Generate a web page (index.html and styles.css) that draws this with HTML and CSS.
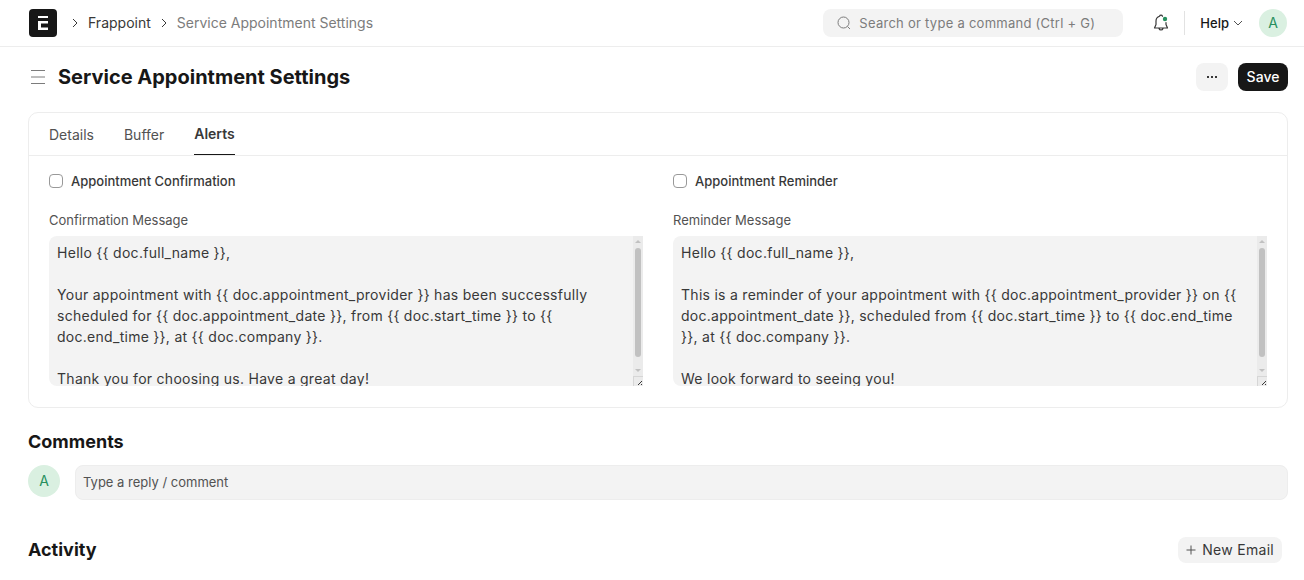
FILE: index.html
```html
<!DOCTYPE html>
<html lang="en">
<head>
<meta charset="utf-8">
<meta name="viewport" content="width=device-width, initial-scale=1">
<title>Service Appointment Settings</title>
<link rel="stylesheet" href="styles.css">
</head>
<body>
<header class="navbar">
  <nav class="breadcrumbs" aria-label="Breadcrumb">
    <a class="logo" href="#" aria-label="Home">
      <svg width="28" height="28" viewBox="0 0 28 28"><rect width="28" height="28" rx="4" fill="#171717"/><path d="M9 7h10v2H9zM9 12h10v2.500h-7V18.500h7V21H9z" fill="#fff"/></svg>
    </a>
    <svg class="chevron" width="8" height="10" viewBox="0 0 8 10"><path d="M2 1l4 4-4 4"/></svg>
    <a class="crumb" href="#">Frappoint</a>
    <svg class="chevron" width="8" height="10" viewBox="0 0 8 10"><path d="M2 1l4 4-4 4"/></svg>
    <a class="crumb crumb-current" href="#">Service Appointment Settings</a>
  </nav>
  <div class="nav-tools">
    <label class="search">
      <svg width="14" height="14" viewBox="0 0 14 14" fill="none" stroke="#7c7c7c"><circle cx="6.5" cy="6.5" r="5.5"/><path d="M10.5 10.5l2.5 2.5"/></svg>
      <input class="search-input" type="text" aria-label="Search" placeholder="Search or type a command (Ctrl + G)">
    </label>
    <button class="bell" type="button" aria-label="Notifications">
      <svg width="16" height="18" viewBox="0 0 16 18" fill="none" stroke="#383838" stroke-width="1.2" stroke-linejoin="round" stroke-linecap="round"><path d="M9.500 2.300C9.200 1.500 8.700 1.200 8 1.200S6.800 1.500 6.500 2.300C4.300 3 3 4.800 3 7v3.500L1.500 14h13L13 10.500V8.500M6 14.500c.3 1 1 1.500 2 1.500s1.700-.5 2-1.500"/><circle cx="12" cy="5" r="2.200" fill="#278f5e" stroke="none"/></svg>
    </button>
    <span class="divider"></span>
    <button class="help" type="button">Help
      <svg width="10" height="6" viewBox="0 0 10 6" fill="none" stroke="#525252"><path d="M1 1l4 4 4-4"/></svg>
    </button>
    <button class="avatar avatar-small" type="button">A</button>
  </div>
</header>
<div class="page-head">
  <button class="menu" type="button" aria-label="Toggle sidebar">
    <svg width="16" height="16" viewBox="0 0 16 16" stroke="#7c7c7c"><path d="M1 1.500h14M1 8h14M1 14.500h14"/></svg>
  </button>
  <h1 class="title">Service Appointment Settings</h1>
  <button class="more" type="button" aria-label="Menu">
    <svg width="12" height="2" viewBox="0 0 12 2" fill="#383838"><path d="M1 0h2v2H1zM5 0h2v2H5zM9 0h2v2H9z"/></svg>
  </button>
  <button class="save" type="button">Save</button>
</div>
<main class="content">
  <section class="card">
    <div class="tabs" role="tablist">
      <button class="tab" type="button" role="tab">Details</button>
      <button class="tab" type="button" role="tab">Buffer</button>
      <button class="tab tab-active" type="button" role="tab" aria-selected="true">Alerts</button>
    </div>
    <div class="columns">
      <div class="column">
        <label class="check"><input class="checkbox" type="checkbox">Appointment Confirmation</label>
        <label class="field-label" for="confirmation">Confirmation Message</label>
        <div class="message-box">
          <textarea class="message" id="confirmation">Hello {{ doc.full_name }},

Your appointment with {{ doc.appointment_provider }} has been successfully scheduled for {{ doc.appointment_date }}, from {{ doc.start_time }} to {{ doc.end_time }}, at {{ doc.company }}.

Thank you for choosing us. Have a great day!</textarea>
          <div class="scrollbar" aria-hidden="true">
            <svg width="10" height="12" viewBox="0 0 10 12" fill="#c1c1c1"><path d="M2 7l3-3 3 3z"/></svg>
            <span class="thumb"></span>
            <svg width="10" height="12" viewBox="0 0 10 12" fill="#c1c1c1"><path d="M2 5l3 3 3-3z"/></svg>
            <svg width="10" height="10" viewBox="0 0 10 10" fill="none"><path d="M0 .5h10M.5 0v10" stroke="#d6d6d6"/><path d="M5 9l4-4M8 9l1-1" stroke="#383838"/></svg>
          </div>
        </div>
      </div>
      <div class="column">
        <label class="check"><input class="checkbox" type="checkbox">Appointment Reminder</label>
        <label class="field-label" for="reminder">Reminder Message</label>
        <div class="message-box">
          <textarea class="message" id="reminder">Hello {{ doc.full_name }},

This is a reminder of your appointment with {{ doc.appointment_provider }} on {{ doc.appointment_date }}, scheduled from {{ doc.start_time }} to {{ doc.end_time }}, at {{ doc.company }}.

We look forward to seeing you!</textarea>
          <div class="scrollbar" aria-hidden="true">
            <svg width="10" height="12" viewBox="0 0 10 12" fill="#c1c1c1"><path d="M2 7l3-3 3 3z"/></svg>
            <span class="thumb"></span>
            <svg width="10" height="12" viewBox="0 0 10 12" fill="#c1c1c1"><path d="M2 5l3 3 3-3z"/></svg>
            <svg width="10" height="10" viewBox="0 0 10 10" fill="none"><path d="M0 .5h10M.5 0v10" stroke="#d6d6d6"/><path d="M5 9l4-4M8 9l1-1" stroke="#383838"/></svg>
          </div>
        </div>
      </div>
    </div>
  </section>
  <h2 class="section-title">Comments</h2>
  <div class="comment-row">
    <span class="avatar">A</span>
    <input class="comment" type="text" aria-label="Comment" placeholder="Type a reply / comment">
  </div>
  <div class="activity">
    <h2 class="section-title">Activity</h2>
    <button class="new-email" type="button">
      <svg width="10" height="10" viewBox="0 0 10 10" stroke="#525252"><path d="M5 0.500v9M0.500 5h9"/></svg>
      New Email
    </button>
  </div>
</main>
</body>
</html>
```
FILE: styles.css
```css
* { box-sizing: border-box; }
body {
  margin: 0;
  background: #fff;
  color: #383838;
  font-family: Inter, "Liberation Sans", sans-serif;
  font-size: 14px;
  line-height: 21px;
}
button, input, textarea { font: inherit; color: inherit; }
button { border: 0; padding: 0; background: none; cursor: pointer; }
a { color: inherit; text-decoration: none; }
svg { display: block; flex: none; }

.navbar {
  display: flex;
  align-items: center;
  justify-content: space-between;
  height: 47px;
  padding: 0 17px 0 29px;
  border-bottom: 1px solid #ededed;
}
.breadcrumbs { display: flex; align-items: center; gap: 9px; }
.logo { margin-right: 5px; }
.chevron { fill: none; stroke: #383838; }
.crumb { padding-bottom: 1px; }
.crumb-current { color: #7c7c7c; }
.nav-tools { display: flex; align-items: center; }
.search {
  display: flex;
  align-items: center;
  gap: 8px;
  width: 300px;
  height: 28px;
  padding: 0 14px;
  border-radius: 8px;
  background: #f3f3f3;
}
.search-input {
  flex: 1;
  min-width: 0;
  padding: 0;
  border: 0;
  outline: 0;
  background: none;
  font-size: 13px;
  letter-spacing: 0.02em;
}
.search-input::placeholder { color: #7c7c7c; opacity: 1; }
.bell { margin-left: 30px; }
.divider { width: 1px; height: 24px; margin: 0 15px; background: #e2e2e2; }
.help { display: flex; align-items: center; gap: 4px; font-size: 13px; font-weight: 500; color: #171717; }
.avatar {
  display: flex;
  align-items: center;
  justify-content: center;
  flex: none;
  width: 32px;
  height: 32px;
  padding-bottom: 1px;
  border-radius: 50%;
  background: #daf0e1;
  color: #278f5e;
}
.avatar-small { width: 28px; height: 28px; margin-left: 16px; }

.page-head { display: flex; align-items: center; height: 60px; padding: 0 16px 0 30px; }
.title { flex: 1; margin: 0 0 0 12px; font-size: 20px; line-height: 24px; font-weight: 700; color: #171717; }
.more {
  display: flex;
  align-items: center;
  justify-content: center;
  width: 32px;
  height: 28px;
  border-radius: 8px;
  background: #f3f3f3;
}
.save { min-width: 50px; height: 28px; margin-left: 10px; padding: 0 8px 1px; border-radius: 8px; background: #171717; color: #fff; font-weight: 500; }

.content { padding: 5px 16px 16px 28px; }
.card { border: 1px solid #ededed; border-radius: 10px; }
.tabs { display: flex; gap: 30px; padding: 0 20px; border-bottom: 1px solid #ededed; }
.tab { height: 42px; color: #525252; }
.tab-active { border-bottom: 1px solid #171717; font-weight: 600; color: #383838; }
.columns { display: grid; grid-template-columns: 1fr 1fr; gap: 30px; padding: 15px 20px 21px; }
.column { display: flex; flex-direction: column; }
.check { display: flex; align-items: center; gap: 8px; height: 20px; font-size: 13px; font-weight: 500; }
.checkbox {
  appearance: none;
  width: 14px;
  height: 14px;
  margin: 0;
  border: 1px solid #999;
  border-radius: 4px;
  background: #fff;
}
.field-label { margin: 19px 0 6px; font-size: 13px; line-height: 20px; color: #525252; }
.message-box {
  display: flex;
  height: 150px;
  overflow: hidden;
  border-radius: 8px 0 0 8px;
  background: #f3f3f3;
}
.message {
  flex: 1;
  min-width: 0;
  padding: 6px 8px;
  border: 0;
  outline: 0;
  background: none;
  letter-spacing: 0.02em;
  resize: none;
  scrollbar-width: none;
}
.scrollbar { display: flex; flex-direction: column; width: 10px; background: #ebebeb; }
.thumb { flex: 1; margin: 0 2px 7px; border-radius: 3px; background: #c1c1c1; }

.section-title { margin: 0; font-size: 18px; line-height: 27px; font-weight: 700; color: #171717; }
.card + .section-title { margin-top: 20px; }
.comment-row { display: flex; gap: 15px; margin-top: 10px; }
.comment {
  flex: 1;
  min-width: 0;
  height: 35px;
  padding: 0 7px 1px;
  border: 1px solid #ededed;
  border-radius: 8px;
  outline: 0;
  background: #f3f3f3;
  font-size: 13px;
}
.comment::placeholder { color: #525252; opacity: 1; }
.activity { display: flex; align-items: center; justify-content: space-between; margin-top: 36px; padding-right: 6px; }
.new-email {
  display: flex;
  align-items: center;
  gap: 6px;
  height: 26px;
  padding: 0 8px;
  border-radius: 8px;
  background: #f3f3f3;
  letter-spacing: 0.02em;
}
```
